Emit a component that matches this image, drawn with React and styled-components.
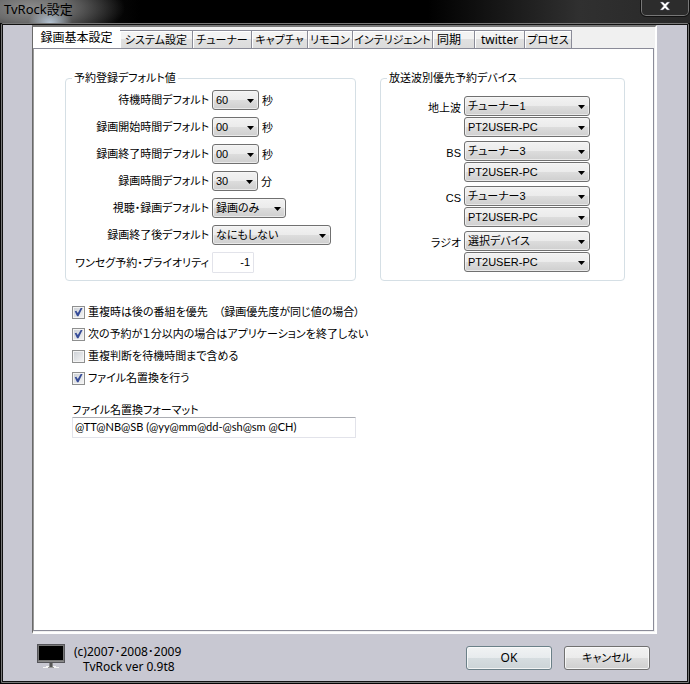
import React, { useState } from "react";
import styled, { createGlobalStyle } from "styled-components";

const Global = createGlobalStyle`
  * { box-sizing: border-box; }
  body { margin: 0; background: #050505; }
  button, input, select { font: inherit; color: inherit; }
`;

const uiFont = `"Liberation Sans", "Noto Sans CJK JP", sans-serif`;
const humanFont = `"Noto Sans", "Noto Sans CJK JP", sans-serif`;
const fieldFont = `Lato, "Noto Sans CJK JP", sans-serif`;

const Window = styled.div`
  display: flex;
  flex-direction: column;
  min-height: 100vh;
  background: #050505;
  color: #000;
  font: 11px/16px ${uiFont};
  font-feature-settings: "palt";
`;

const TitleBar = styled.header`
  display: flex;
  justify-content: space-between;
  align-items: flex-start;
  height: 23px;
  background:
    radial-gradient(ellipse 22px 16px at 50px 23px, #b4c4d4 0%, transparent 100%),
    radial-gradient(ellipse 95px 34px at 30px 8px, #8c8c8c 0%, #6c6c6c 40%, transparent 100%),
    linear-gradient(90deg, #222 0, #000 140px, #000 62%, #303030 84%, #282828 100%);
`;

const Title = styled.h1`
  margin: 0;
  padding: 0 4px;
  font: 13px/18px ${humanFont};
`;

const CloseButton = styled.button`
  display: grid;
  place-items: center;
  width: 48px;
  height: 16px;
  margin-right: 1px;
  padding: 0 0 4px;
  border: 1px solid #777;
  border-top: 0;
  border-radius: 0 0 5px 5px;
  outline: 1px solid #111;
  background: #2c2c2c;
`;

const Frame = styled.div`
  flex: 1;
  display: flex;
  border: 1px solid #777;
  border-radius: 2px 2px 0 0;
  margin: 0 1px 1px;
`;

const Client = styled.main`
  flex: 1;
  display: flex;
  flex-direction: column;
  min-width: 0;
  border: 1px solid #111;
  background: #c8c8d2;
  padding: 0 30px 0 29px;
`;

const TabControl = styled.section`
  flex: 1;
  display: flex;
  flex-direction: column;
  background: #f0f0f0;
  border: solid;
  border-width: 2px 2px 2px 1px;
  border-color: #777 #fff #fff #696969;
`;

const TabList = styled.div`
  display: flex;
  align-items: flex-end;
  height: 21px;
`;

const Tab = styled.button`
  flex: 0 0 ${(p) => p.$width}px;
  min-width: 0;
  height: ${(p) => (p.$active ? 21 : 18)}px;
  padding: 0 0 0 ${(p) => (p.$start ? 4 : 0)}px;
  border: 1px solid #8a8b98;
  border-width: ${(p) => (p.$active ? "0" : "1px 1px 0 0")};
  background: ${(p) => (p.$active ? "#fff" : "linear-gradient(#f3f3f3 0 50%, #e0e0e0 50%, #dcdcdc)")};
  box-shadow: ${(p) => (p.$active ? "none" : "inset 1px 1px 0 #fff")};
  font-family: ${(p) => (p.$latin ? humanFont : uiFont)};
  font-size: ${(p) => (p.$size ? p.$size : 11)}px;
  text-align: ${(p) => (p.$start ? "left" : "center")};
  white-space: nowrap;
  line-height: 16px;
`;

const Panel = styled.div`
  flex: 1;
  margin: 0 1px 1px 0;
  padding: 21px 28px 0 31px;
  background: #fff;
  border: 1px solid #8a8b98;
  border-left: 1px solid #999;
`;

const Groups = styled.div`
  display: grid;
  grid-template-columns: 291fr 245fr;
  gap: 24px;
`;

const Group = styled.fieldset`
  min-width: 0;
  margin: 0;
  padding: 0 0 ${(p) => p.$bottom}px;
  border: 1px solid #d5dfe5;
  border-radius: 4px;
`;

const Legend = styled.legend`
  margin-left: 6px;
  padding: 0 2px;
  line-height: 16px;
`;

const DefaultRows = styled.div`
  display: grid;
  gap: 7px;
  padding-top: 4px;
`;

const DefaultRow = styled.div`
  display: grid;
  grid-template-columns: 143px auto 1fr;
  column-gap: 3px;
  align-items: center;
  height: 20px;
`;

const RowLabel = styled.label`
  text-align: right;
  white-space: nowrap;
  line-height: 18px;
`;

const Unit = styled.span`
  padding-top: 2px;
`;

const SelectBox = styled.span`
  position: relative;
  display: block;
  width: ${(p) => p.$width}px;
  height: 20px;

  &::after {
    content: "";
    position: absolute;
    right: 5px;
    top: 9px;
    width: 7px;
    height: 4px;
    background: #000;
    clip-path: polygon(0 0, 100% 0, 50% 100%);
    pointer-events: none;
  }
`;

const NativeSelect = styled.select`
  appearance: none;
  display: block;
  width: 100%;
  height: 20px;
  padding: 0 14px 0 3px;
  border: 1px solid #707070;
  border-radius: 3px;
  background: linear-gradient(#f2f2f2, #ebebeb 50%, #dddddd 50%, #cfcfcf);
  box-shadow: inset 0 0 0 1px #f8f8f8aa;
  line-height: 16px;
`;

const NumberField = styled.input`
  width: 42px;
  height: 21px;
  padding: 0 3px 2px;
  border: 1px solid #e2e3ea;
  border-radius: 1px;
  background: #fff;
  text-align: right;
`;

const TextField = styled.input`
  width: 100%;
  height: 21px;
  padding: 0 2px 3px;
  border: 1px solid #e2e3ea;
  border-top-color: #abadb3;
  border-radius: 1px;
  background: #fff;
  font-family: ${fieldFont};
  font-size: 11px;
`;

const DeviceRows = styled.div`
  display: grid;
  gap: 4px;
  padding-top: 10px;
`;

const DeviceRow = styled.div`
  display: grid;
  grid-template-columns: 80px auto;
  column-gap: 3px;
  justify-content: start;
`;

const DeviceLabel = styled.label`
  padding-top: 4px;
  text-align: right;
`;

const DevicePair = styled.div`
  display: grid;
  gap: 1px;
`;

const Options = styled.div`
  display: grid;
  gap: 6px;
  margin: 23px 0 0 7px;
`;

const Option = styled.label`
  display: flex;
  align-items: center;
  gap: 3px;
  white-space: nowrap;
`;

const CheckBox = styled.input`
  appearance: none;
  display: grid;
  place-items: center;
  width: 13px;
  height: 13px;
  margin: 0;
  border: 1px solid #8e8f8f;
  background: linear-gradient(135deg, #cbcfd5, #f6f6f6);
  box-shadow: inset 0 0 0 1px #f4f4f4;

  &:checked::before {
    content: "";
    width: 9px;
    height: 9px;
    background: #364c98;
    clip-path: polygon(8% 42%, 26% 36%, 42% 62%, 76% 2%, 96% 2%, 50% 98%, 34% 98%);
  }
`;

const FormatField = styled.div`
  width: 284px;
  max-width: 100%;
  margin: 17px 0 0 7px;
`;

const FormatLabel = styled.label`
  display: block;
  line-height: 14px;
`;

const Footer = styled.footer`
  display: flex;
  align-items: flex-start;
  height: 47px;
  padding: 10px 7px 0 5px;
`;

const Version = styled.p`
  flex: 1;
  margin: 0 0 0 8px;
  font: 12px/15px ${humanFont};
  white-space: nowrap;
`;

const VersionLine = styled.span`
  display: block;
  padding-left: ${(p) => (p.$indent ? 9 : 0)}px;
`;

const Actions = styled.div`
  display: flex;
  gap: 12px;
  padding-top: 2px;
`;

const ActionButton = styled.button`
  width: 86px;
  height: 24px;
  padding: 0;
  border: 1px solid ${(p) => (p.$primary ? "#6b8088" : "#707070")};
  border-radius: 3px;
  background: ${(p) =>
    p.$primary
      ? "linear-gradient(#f1f3f4, #e7ebed 50%, #d6dde0 50%, #ccd4d7)"
      : "linear-gradient(#f2f2f2, #ebebeb 50%, #dddddd 50%, #cfcfcf)"};
  box-shadow: inset 0 0 0 1px #fbfbfbcc;
  font-family: ${(p) => (p.$primary ? humanFont : uiFont)};
  font-size: ${(p) => (p.$primary ? 12 : 11)}px;
`;

const TABS = [
  { name: "録画基本設定", width: 87, size: 12 },
  { name: "システム設定", width: 73 },
  { name: "チューナー", width: 59 },
  { name: "キャプチャ", width: 56 },
  { name: "リモコン", width: 45 },
  { name: "インテリジェント", width: 80 },
  { name: "同期", width: 42, start: true, size: 12 },
  { name: "twitter", width: 50, latin: true, size: 12 },
  { name: "プロセス", width: 47 },
];

const DEFAULTS = [
  { id: "wait", label: "待機時間デフォルト", value: "60", width: 47, unit: "秒" },
  { id: "start", label: "録画開始時間デフォルト", value: "00", width: 47, unit: "秒" },
  { id: "end", label: "録画終了時間デフォルト", value: "00", width: 47, unit: "秒" },
  { id: "length", label: "録画時間デフォルト", value: "30", width: 46, unit: "分" },
  { id: "mode", label: "視聴・録画デフォルト", value: "録画のみ", width: 74 },
  { id: "after", label: "録画終了後デフォルト", value: "なにもしない", width: 119 },
];

const DEVICES = [
  { id: "terrestrial", label: "地上波", tuner: "チューナー1" },
  { id: "bs", label: "BS", tuner: "チューナー3" },
  { id: "cs", label: "CS", tuner: "チューナー3" },
  { id: "radio", label: "ラジオ", tuner: "選択デバイス" },
];

const OPTIONS = [
  { text: "重複時は後の番組を優先　（録画優先度が同じ値の場合）", on: true },
  { text: "次の予約が１分以内の場合はアプリケーションを終了しない", on: true },
  { text: "重複判断を待機時間まで含める", on: false },
  { text: "ファイル名置換を行う", on: true },
];

function Select({ id, label, value, width }) {
  return (
    <SelectBox $width={width}>
      <NativeSelect id={id} aria-label={label} defaultValue={value}>
        <option>{value}</option>
      </NativeSelect>
    </SelectBox>
  );
}

function MonitorIcon() {
  return (
    <svg width="29" height="25" viewBox="0 0 29 25" aria-hidden="true">
      <rect x="0" y="0" width="28" height="19" fill="#55555a" />
      <rect x="1" y="1" width="26" height="16" fill="#777" />
      <rect x="2" y="2" width="24" height="14" fill="#000" />
      <rect x="1" y="17" width="26" height="1" fill="#8c8c8c" />
      <rect x="12" y="19" width="4" height="4" fill="#888" />
      <rect x="13" y="19" width="2" height="4" fill="#555" />
      <path d="M6 23.5h5M17 23.5h5M9 22.5h3M16 22.5h3" stroke="#f5f5f5" />
      <path d="M11 23.5h6" stroke="#999" />
    </svg>
  );
}

export default function App() {
  const [active, setActive] = useState(0);
  return (
    <Window>
      <Global />
      <TitleBar>
        <Title>TvRock設定</Title>
        <CloseButton type="button" aria-label="閉じる">
          <svg width="12" height="10" viewBox="0 0 12 10" aria-hidden="true">
            <path d="M1 1h3l2 2 2-2h3L7.500 5 11 9H8L6 7 4 9H1l3.500-4z" fill="#fff" stroke="#555566" strokeWidth="0.500" />
          </svg>
        </CloseButton>
      </TitleBar>
      <Frame>
        <Client>
          <TabControl>
            <TabList role="tablist">
              {TABS.map((tab, i) => (
                <Tab
                  key={tab.name}
                  type="button"
                  role="tab"
                  aria-selected={i === active}
                  $active={i === active}
                  $width={tab.width}
                  $latin={tab.latin}
                  $size={tab.size}
                  $start={tab.start}
                  onClick={() => setActive(i)}
                >
                  {tab.name}
                </Tab>
              ))}
            </TabList>
            <Panel role="tabpanel">
              <Groups>
                <Group $bottom={7}>
                  <Legend>予約登録デフォルト値</Legend>
                  <DefaultRows>
                    {DEFAULTS.map((row) => (
                      <DefaultRow key={row.id}>
                        <RowLabel htmlFor={row.id}>{row.label}</RowLabel>
                        <Select id={row.id} value={row.value} width={row.width} />
                        {row.unit && <Unit>{row.unit}</Unit>}
                      </DefaultRow>
                    ))}
                    <DefaultRow>
                      <RowLabel htmlFor="priority">ワンセグ予約・プライオリティ</RowLabel>
                      <NumberField id="priority" defaultValue="-1" />
                    </DefaultRow>
                  </DefaultRows>
                </Group>
                <Group $bottom={8}>
                  <Legend>放送波別優先予約デバイス</Legend>
                  <DeviceRows>
                    {DEVICES.map((row) => (
                      <DeviceRow key={row.id}>
                        <DeviceLabel htmlFor={row.id}>{row.label}</DeviceLabel>
                        <DevicePair>
                          <Select id={row.id} value={row.tuner} width={126} />
                          <Select label={`${row.label} PC`} value="PT2USER-PC" width={126} />
                        </DevicePair>
                      </DeviceRow>
                    ))}
                  </DeviceRows>
                </Group>
              </Groups>
              <Options>
                {OPTIONS.map((option) => (
                  <Option key={option.text}>
                    <CheckBox type="checkbox" defaultChecked={option.on} />
                    {option.text}
                  </Option>
                ))}
              </Options>
              <FormatField>
                <FormatLabel htmlFor="format">ファイル名置換フォーマット</FormatLabel>
                <TextField id="format" defaultValue="@TT@NB@SB (@yy@mm@dd-@sh@sm @CH)" />
              </FormatField>
            </Panel>
          </TabControl>
          <Footer>
            <MonitorIcon />
            <Version>
              <VersionLine>(c)2007･2008･2009</VersionLine>
              <VersionLine $indent>TvRock ver 0.9t8</VersionLine>
            </Version>
            <Actions>
              <ActionButton type="button" $primary>OK</ActionButton>
              <ActionButton type="button">キャンセル</ActionButton>
            </Actions>
          </Footer>
        </Client>
      </Frame>
    </Window>
  );
}
